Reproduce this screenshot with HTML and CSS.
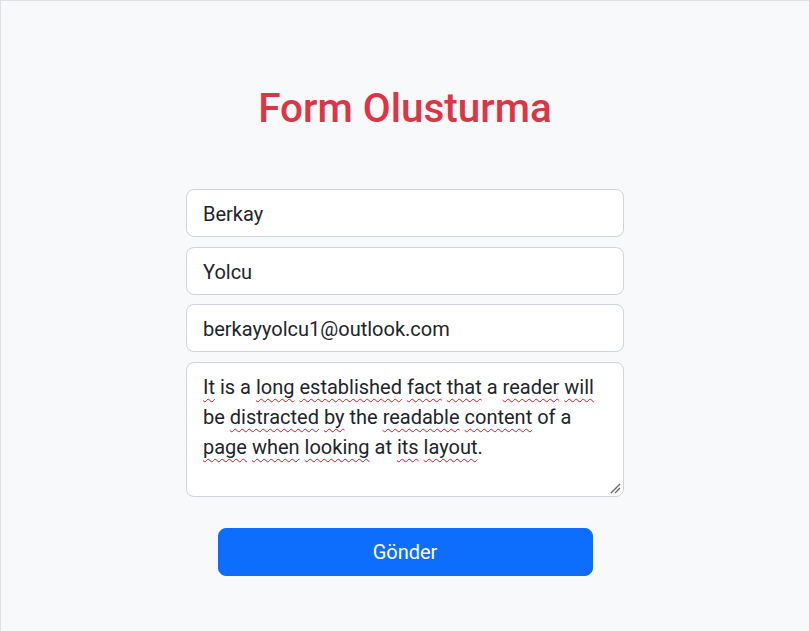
FILE: index.html
```html
<!DOCTYPE html>
<html lang="tr">
<head>
<meta charset="utf-8">
<title>Form Olusturma</title>
<link rel="stylesheet" href="styles.css">
</head>
<body>
<div class="frame">
  <main class="container">
    <h1 class="title">Form Olusturma</h1>
    <form class="form">
      <input class="field" type="text" value="Berkay">
      <input class="field" type="text" value="Yolcu">
      <input class="field" type="email" value="berkayyolcu1@outlook.com">
      <div class="field area" role="textbox" aria-multiline="true"><span class="sp">It</span> is a <span class="sp">long</span> <span class="sp">established</span> <span class="sp">fact</span> <span class="sp">that</span> a <span class="sp">reader</span> <span class="sp">will</span><br>be <span class="sp">distracted</span> <span class="sp">by</span> the <span class="sp">readable</span> <span class="sp">content</span> of a<br><span class="sp">page</span> <span class="sp">when</span> <span class="sp">looking</span> at <span class="sp">its</span> <span class="sp">layout</span>.<svg class="grip" width="11" height="11" viewBox="0 0 11 11"><path d="M10 1 L1 10 M10 5 L5 10" stroke="#666" stroke-width="1.3" fill="none"/></svg></div>
      <div class="actions">
        <button class="btn" type="button">Gönder</button>
      </div>
    </form>
  </main>
</div>
</body>
</html>
```
FILE: styles.css
```css
* { box-sizing: border-box; }
html, body { margin: 0; padding: 0; height: 100%; }
body {
  background: #f8f9fa;
  font-family: "Segoe UI", Roboto, "Noto Sans", sans-serif;
  color: #212529;
}
.frame {
  min-height: 100%;
  border-top: 1px solid #dee2e6;
  border-left: 1px solid #dee2e6;
}
.container {
  width: 438px;
  margin: 0 auto;
  padding-top: 83px;
}
.title {
  margin: 0 0 57px;
  font-size: 40.5px;
  font-weight: 500;
  line-height: 48px;
  color: #dc3545;
  text-align: center;
}
.form {
  display: flex;
  flex-direction: column;
  gap: 9.67px;
}
.field {
  display: block;
  width: 100%;
  height: 48px;
  padding: 9px 16px 7px;
  font: inherit;
  font-size: 20px;
  line-height: 30px;
  color: #212529;
  background: #fff;
  border: 1px solid #ced4da;
  border-radius: 8px;
  outline: none;
}
.area {
  position: relative;
  height: 135px;
  white-space: nowrap;
}
.sp {
  text-decoration: underline wavy #e81123;
  text-decoration-thickness: 1px;
  text-underline-offset: 4px;
  text-decoration-skip-ink: none;
}
.grip {
  position: absolute;
  right: 2px;
  bottom: 2px;
}
.actions {
  display: flex;
  justify-content: center;
  padding-top: 21px;
}
.btn {
  width: 375px;
  height: 48px;
  padding: 1px 0 0;
  font: inherit;
  font-size: 20px;
  color: #fff;
  background: #0d6efd;
  border: 1px solid #0d6efd;
  border-radius: 8px;
}
```
